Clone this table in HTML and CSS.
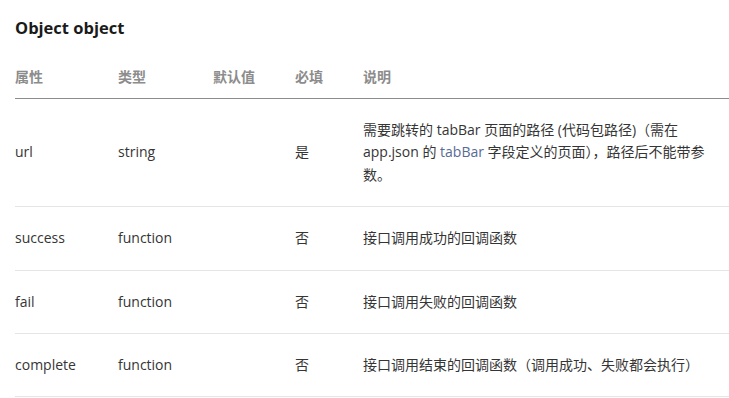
FILE: index.html
```html
<!DOCTYPE html>
<html lang="zh-CN">
<head>
<meta charset="utf-8">
<title>Object object</title>
<link rel="stylesheet" href="styles.css">
</head>
<body>
<section class="doc">
  <h3 class="title">Object object</h3>
  <table class="params">
    <colgroup>
      <col class="c-name"><col class="c-type"><col class="c-def"><col class="c-req"><col class="c-desc">
    </colgroup>
    <thead>
      <tr><th>属性</th><th>类型</th><th>默认值</th><th>必填</th><th>说明</th></tr>
    </thead>
    <tbody>
      <tr>
        <td>url</td><td>string</td><td></td><td>是</td>
        <td>需要跳转的 tabBar 页面的路径 (代码包路径)（需在 app.json 的 <a class="link" href="#">tabBar</a> 字段定义的页面），路径后不能带参数。</td>
      </tr>
      <tr><td>success</td><td>function</td><td></td><td>否</td><td>接口调用成功的回调函数</td></tr>
      <tr><td>fail</td><td>function</td><td></td><td>否</td><td>接口调用失败的回调函数</td></tr>
      <tr><td>complete</td><td>function</td><td></td><td>否</td><td>接口调用结束的回调函数（调用成功、失败都会执行）</td></tr>
    </tbody>
  </table>
</section>
</body>
</html>
```

FILE: styles.css
```css
html, body {
  margin: 0;
  padding: 0;
  background: #ffffff;
}

body {
  font-family: "Open Sans", "Noto Sans CJK SC", sans-serif;
  font-size: 14px;
  color: #353535;
}

.doc {
  padding: 17px 0 0 15px;
}

.title {
  margin: 0;
  font-size: 16.5px;
  line-height: 22px;
  font-weight: 700;
  color: #1a1a1a;
}

.params {
  margin-top: 17px;
  width: 714px;
  border-collapse: collapse;
  table-layout: fixed;
}

.c-name { width: 103px; }
.c-type { width: 95px; }
.c-def { width: 82px; }
.c-req { width: 68px; }

.params th {
  text-align: left;
  font-weight: 700;
  color: #8c8c8c;
  padding: 10px 0;
  line-height: 22px;
  border-bottom: 1px solid #8c8c8c;
}

.params td {
  padding: 20px 8px 20px 0;
  line-height: 22.4px;
  vertical-align: middle;
  border-bottom: 1px solid #e5e5e5;
}

.link {
  color: #576b95;
  text-decoration: none;
}
```
